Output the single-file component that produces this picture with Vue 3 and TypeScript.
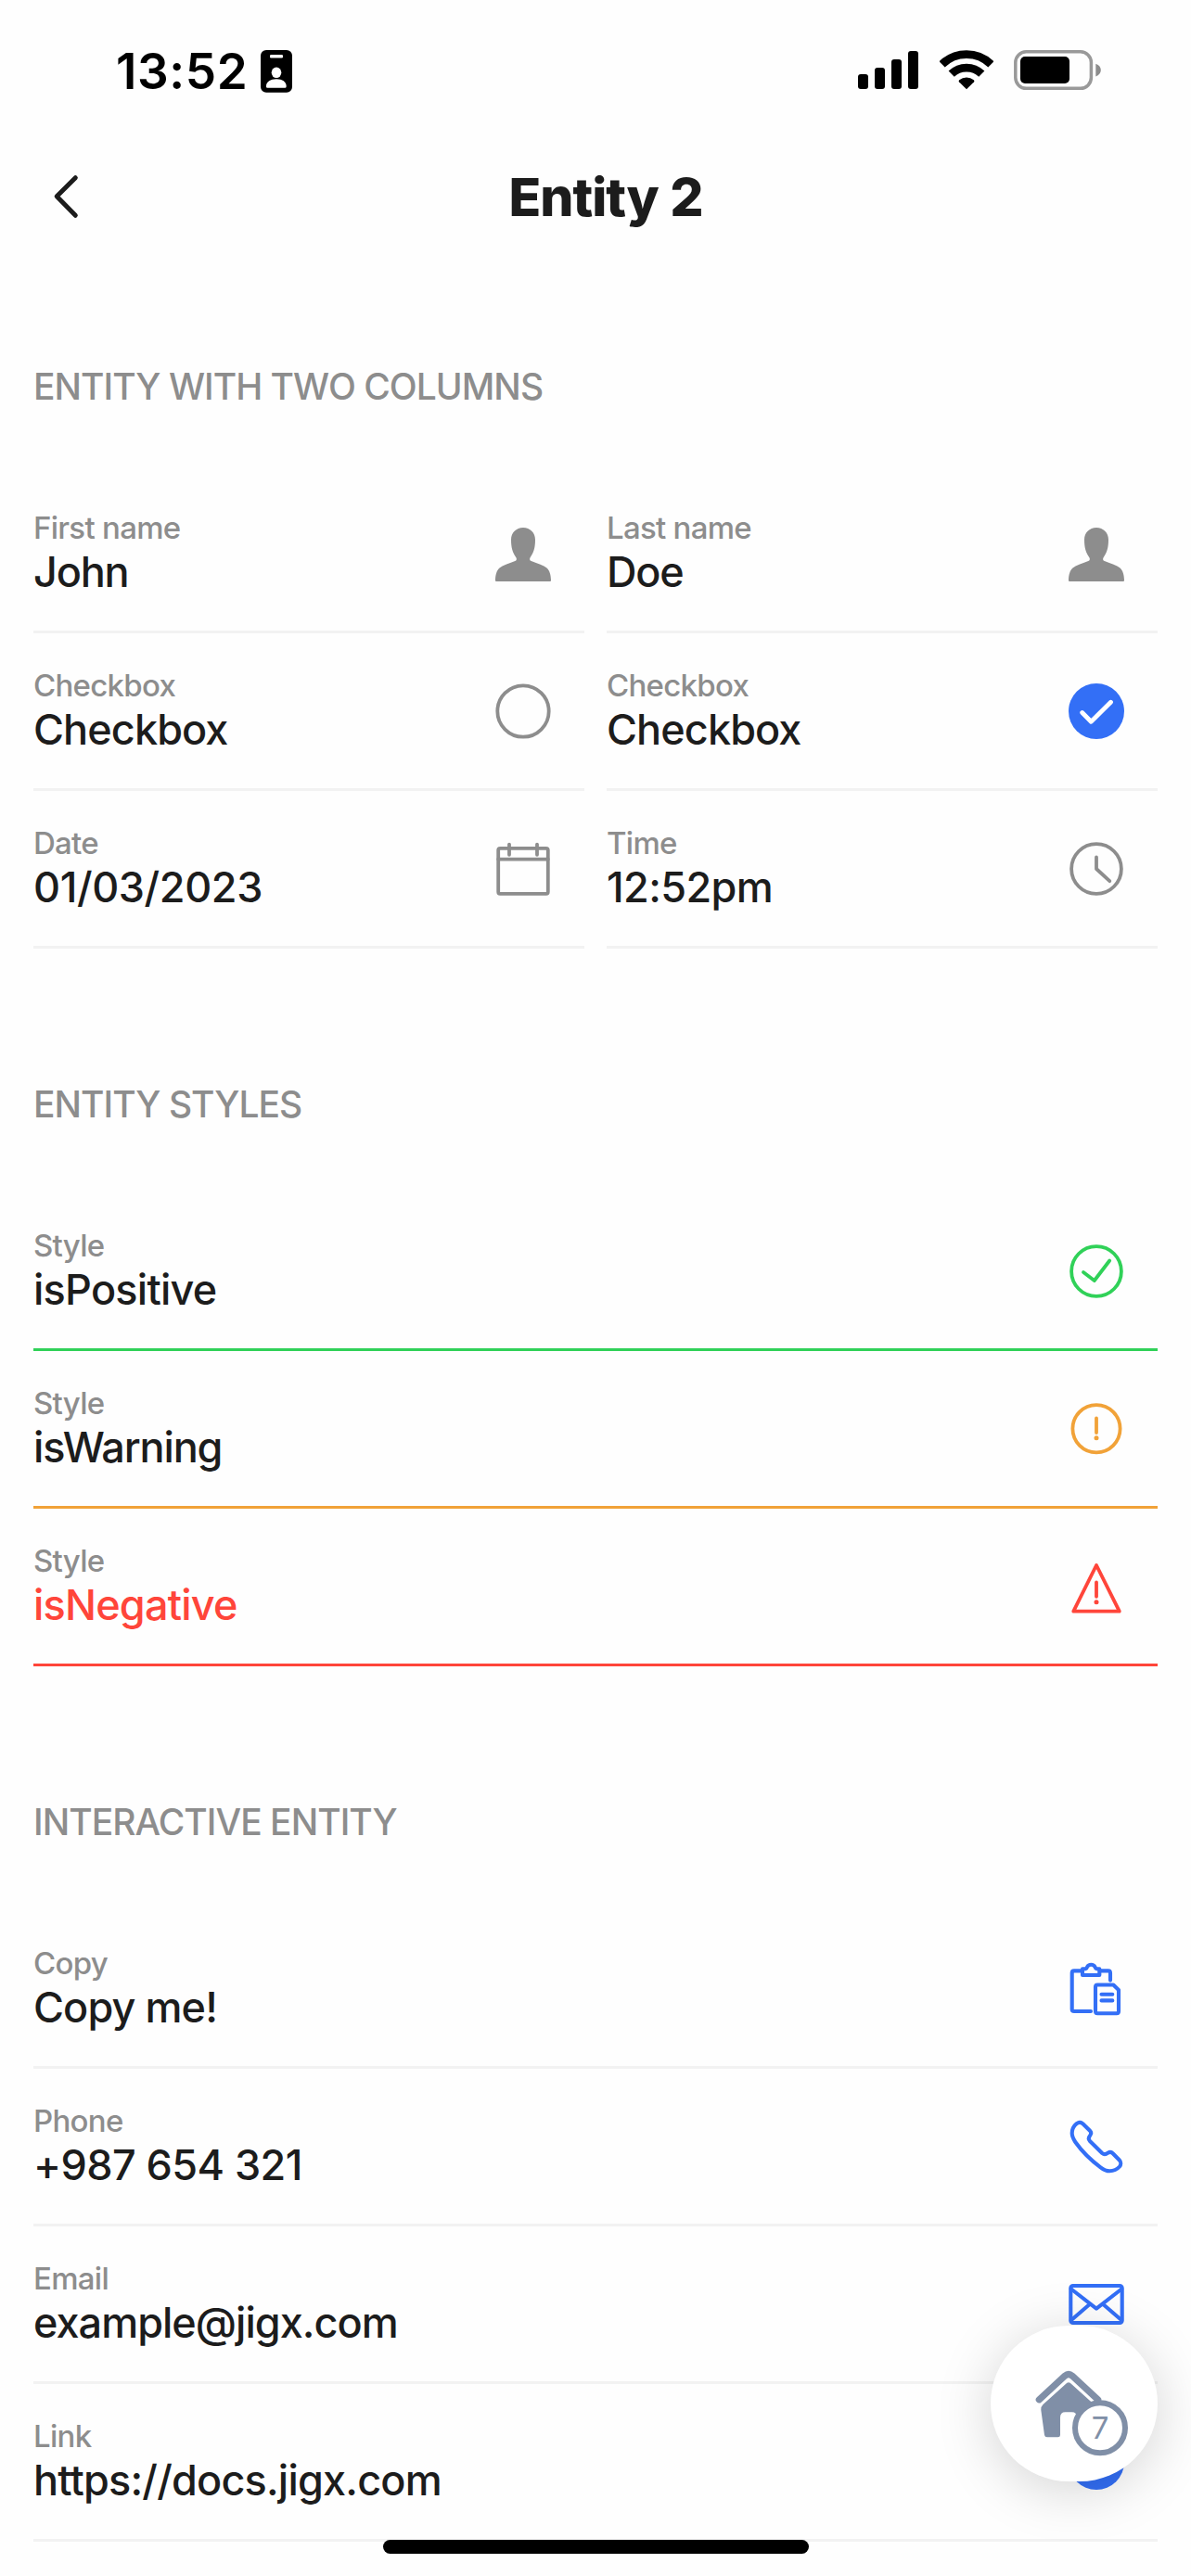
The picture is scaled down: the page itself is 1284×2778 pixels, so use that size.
<script setup lang="ts">
type Tone = 'default' | 'positive' | 'warning' | 'negative'
type IconName =
  | 'person' | 'circle' | 'checked' | 'calendar' | 'clock'
  | 'positive' | 'warning' | 'negative'
  | 'copy' | 'phone' | 'mail' | 'link'

interface Field {
  label: string
  value: string
  icon: IconName
  tone?: Tone
  /* letter spacing of the value, px */
  tracking?: number
}

interface Section {
  title: string
  columns: 1 | 2
  fields: Field[]
}

const sections: Section[] = [
  {
    title: 'ENTITY WITH TWO COLUMNS',
    columns: 2,
    fields: [
      { label: 'First name', value: 'John', icon: 'person', tracking: -1.2 },
      { label: 'Last name', value: 'Doe', icon: 'person', tracking: -1.2 },
      { label: 'Checkbox', value: 'Checkbox', icon: 'circle' },
      { label: 'Checkbox', value: 'Checkbox', icon: 'checked' },
      { label: 'Date', value: '01/03/2023', icon: 'calendar', tracking: -0.4 },
      { label: 'Time', value: '12:52pm', icon: 'clock', tracking: -0.6 },
    ],
  },
  {
    title: 'ENTITY STYLES',
    columns: 1,
    fields: [
      { label: 'Style', value: 'isPositive', icon: 'positive', tone: 'positive', tracking: -0.75 },
      { label: 'Style', value: 'isWarning', icon: 'warning', tone: 'warning', tracking: -1.15 },
      { label: 'Style', value: 'isNegative', icon: 'negative', tone: 'negative', tracking: -0.8 },
    ],
  },
  {
    title: 'INTERACTIVE ENTITY',
    columns: 1,
    fields: [
      { label: 'Copy', value: 'Copy me!', icon: 'copy' },
      { label: 'Phone', value: '+987 654 321', icon: 'phone', tracking: -0.58 },
      { label: 'Email', value: 'example@jigx.com', icon: 'mail', tracking: -0.97 },
      { label: 'Link', value: 'https://docs.jigx.com', icon: 'link', tracking: -0.8 },
    ],
  },
]
</script>

<template>
  <div class="screen">
    <header class="status">
      <div class="status-left">
        <span class="time">13:52</span>
        <svg class="id-badge" width="34" height="46" viewBox="0 0 34 46">
          <rect width="34" height="45.7" rx="6" fill="#000" />
          <rect x="10" y="5" width="14" height="3.4" rx="1.2" fill="#fff" />
          <ellipse cx="17" cy="24.3" rx="5.3" ry="5.8" fill="#fff" />
          <path d="M6 38.5C6 34.5 10.5 31.3 17 31.3S27.6 34.5 27.6 38.5V39.4Q27.6 40.7 26.3 40.7H7.3Q6 40.7 6 39.4Z" fill="#fff" />
        </svg>
      </div>
      <div class="status-right">
        <svg width="65" height="44" viewBox="0 0 65 44">
          <rect x="0" y="26" width="11" height="16" rx="3" />
          <rect x="18" y="19" width="11" height="23" rx="3" />
          <rect x="36" y="10" width="11" height="32" rx="3" />
          <rect x="54" y="1" width="11" height="41" rx="3" />
        </svg>
        <svg class="wifi" width="58" height="44" viewBox="0 0 58 44">
          <path d="M2.6 15.3A37.8 37.8 0 0 1 55.4 15.3" fill="none" stroke="#000" stroke-width="8.8" />
          <path d="M12.7 25.7A23.3 23.3 0 0 1 45.3 25.7" fill="none" stroke="#000" stroke-width="8.8" />
          <path d="M29 42.3L20.9 34.2Q20.1 33.3 21.2 32.3A12.5 12.5 0 0 1 36.8 32.3Q37.9 33.3 37.1 34.2Z" />
        </svg>
        <svg class="battery" width="95" height="44" viewBox="0 0 95 44">
          <rect x="1.8" y="1.8" width="81.6" height="39.5" rx="11.5" fill="none" stroke="#999" stroke-width="3.5" />
          <rect x="7" y="7" width="53" height="29" rx="5" />
          <path d="M88.3 14.8C92 16 93.8 18.6 93.8 21.6S92 27.2 88.3 28.4Z" fill="#8c8c8c" />
        </svg>
      </div>
    </header>

    <nav class="nav">
      <svg class="back" width="34" height="48" viewBox="0 0 34 48">
        <path d="M27.3 3.7L7.2 23.8L27.3 44.3" fill="none" stroke="#1c1c1c" stroke-width="5" stroke-linecap="round" stroke-linejoin="round" />
      </svg>
      <h1 class="title">Entity 2</h1>
    </nav>

    <main>
      <section v-for="s in sections" :key="s.title" class="section">
        <h2 class="heading">{{ s.title }}</h2>
        <div class="grid" :class="{ two: s.columns === 2 }">
          <div v-for="(f, i) in s.fields" :key="i" class="field" :class="f.tone">
            <div class="texts">
              <span class="label">{{ f.label }}</span>
              <span class="value" :style="{ letterSpacing: (f.tracking ?? -0.9) + 'px' }">{{ f.value }}</span>
            </div>
            <svg class="icon" :class="'i-' + f.icon" viewBox="0 0 60 60" width="60" height="60">
              <path
                v-if="f.icon === 'person'"
                class="solid"
                d="M30 2C37.5 2 43 7.5 43 15C43 24 41.3 29 37.6 34.2C36.7 35.8 37 37.4 38.7 38.1C46 40.8 52 42.8 55.5 45.4C58.2 47.7 60 52.5 60 59Q60 60 59 60H1Q0 60 0 59C0 52.5 1.8 47.7 4.5 45.4C8 42.8 14 40.8 21.3 38.1C23 37.4 23.3 35.8 22.4 34.2C18.7 29 17 24 17 15C17 7.5 22.5 2 30 2Z"
              />
              <circle v-else-if="f.icon === 'circle'" cx="30" cy="30" r="27.7" />
              <template v-else-if="f.icon === 'checked'">
                <circle class="solid" cx="30" cy="30" r="30" />
                <path d="M14.7 31.5L24.3 41.3L45.5 20.2" stroke="#fff" stroke-width="4.8" />
              </template>
              <template v-else-if="f.icon === 'calendar'">
                <rect x="3.2" y="7.8" width="53.6" height="49" rx="2" />
                <path d="M3.2 19.6H56.8M15 3.6V14.8M45 3.6V14.8" />
              </template>
              <template v-else-if="f.icon === 'clock'">
                <circle cx="30" cy="30" r="26.9" />
                <path d="M30 17.5V30L44.3 43.2" />
              </template>
              <template v-else-if="f.icon === 'positive'">
                <circle cx="30" cy="30" r="26.9" />
                <path d="M16 31L27.8 40L44.2 18.5" />
              </template>
              <template v-else-if="f.icon === 'warning'">
                <circle cx="30" cy="29.8" r="25.6" />
                <path d="M30 18.5V34" />
                <circle class="solid" cx="30" cy="39.7" r="2.5" />
              </template>
              <template v-else-if="f.icon === 'negative'">
                <path d="M30 7L54.8 56.7H5.3Z" />
                <path d="M30 25.5V40.8" />
                <circle class="solid" cx="30" cy="46.7" r="2.5" />
              </template>
              <template v-else-if="f.icon === 'copy'">
                <path d="M15 10.4H6Q3.7 10.4 3.7 12.7V51.7Q3.7 54 6 54H24M34 10.4H42.7Q45 10.4 45 12.7V20.6" />
                <path d="M15 15V8.2H18.2Q19.8 7.8 20 6.3Q21.3 3.7 24.3 3.7T28.6 6.3Q28.8 7.8 30.4 8.2H33.3V15Z" />
                <path d="M31.2 25.5H48.3L54 31V54Q54 56.2 51.8 56.2H31.2Q29 56.2 29 54V27.7Q29 25.5 31.2 25.5Z" />
                <path d="M35.5 35.7H47.3M35.5 42.4H47.3" />
              </template>
              <path
                v-else-if="f.icon === 'phone'"
                d="M15.6 5.5C13.6 3.5 10.8 3.5 8.7 5.1C5.5 7.7 3.7 11.5 3.7 15.5C3.7 19.5 5 21.5 7.3 25C14.5 35.2 24 44.5 34.5 52.3C38 55 40.5 56.3 44.3 56.3C48.8 56.2 52.2 54.6 55 51.5C56.7 49.5 56.7 46.5 54.8 44.5L47.7 37.2C46.3 35.7 44.3 35.5 42.5 36.7C40.3 38.4 38 38.6 36.2 37L23 24C21.3 22.3 21.5 20.2 23 18.3C24.6 16.3 24.5 14.3 23 12.8Z"
              />
              <template v-else-if="f.icon === 'mail'">
                <rect x="2.3" y="10" width="55.4" height="40" rx="2.5" />
                <path d="M2.8 13.5L30 34.6L57.2 13.5M23 29.8L3 47M37 29.8L57 47" />
              </template>
              <circle v-else class="solid" cx="30" cy="30" r="30" />
            </svg>
          </div>
        </div>
      </section>
    </main>

    <button class="fab" type="button" aria-label="Home">
      <svg width="180" height="168" viewBox="0 0 180 168">
        <g fill="#808fa7">
          <path d="M52.3 79.8L80 54.2Q84 50.7 88 54.2L115.7 79.8" fill="none" stroke="#808fa7" stroke-width="7.2" stroke-linecap="round" />
          <path d="M82.3 61.8Q84 60.5 85.7 61.8L111.5 85Q114 87.3 113.7 91L111 118Q110.7 120.3 108.5 120.3H94.5Q93 120.3 93 118V99Q93 93.2 87.5 93.2H80.5Q75 93.2 75 99V118Q75 120.3 72.5 120.3H61Q58.4 120.3 58 118L54.3 91Q54 87.3 56.5 85Z" />
        </g>
        <circle cx="118" cy="110.3" r="27" fill="#fff" stroke="#808fa7" stroke-width="6" />
      </svg>
      <span class="count">7</span>
    </button>
    <div class="home-indicator"></div>
  </div>
</template>

<style>
body {
  margin: 0;
  background: #fefefe;
}
</style>

<style scoped>
.screen {
  position: relative;
  width: 1284px;
  height: 2778px;
  overflow: hidden;
  background: #fefefe;
  color: #1c1c1c;
  font-family: Inter, 'Liberation Sans', sans-serif;
}

.status {
  display: flex;
  justify-content: space-between;
  box-sizing: border-box;
  height: 141px;
  padding: 54px 96px 0 125px;
}

.status-left,
.status-right {
  display: flex;
  align-items: flex-start;
}

.time {
  width: 156px;
  height: 46px;
  line-height: 47px;
  font-size: 53px;
  font-weight: 600;
  letter-spacing: 0.6px;
  color: #000;
}

.wifi,
.battery {
  margin-left: 22.5px;
}

.nav {
  display: flex;
  align-items: center;
  height: 142px;
  padding-left: 54px;
}

.back {
  flex: none;
}

.title {
  width: 1130px;
  margin: 0;
  padding-top: 2px;
  text-align: center;
  font-size: 57px;
  line-height: 70px;
  font-weight: 800;
  letter-spacing: -1px;
  word-spacing: 1px;
}

main {
  margin-top: -34px;
  padding: 0 36px;
}

.section {
  padding-top: 144px;
}

.heading {
  margin: 0;
  padding-bottom: 72px;
  font-size: 39px;
  line-height: 48px;
  font-weight: 500;
  letter-spacing: -0.98px;
  color: #8d8d8d;
}

.grid {
  display: grid;
  grid-template-columns: 1fr;
  column-gap: 24px;
}

.grid.two {
  grid-template-columns: 1fr 1fr;
}

.field {
  display: flex;
  justify-content: space-between;
  box-sizing: border-box;
  height: 170px;
  padding-right: 36px;
  border-bottom: 3px solid #f2f2f2;
}

.texts {
  display: flex;
  flex-direction: column;
  gap: 1px;
  padding-top: 36px;
}

.label {
  font-size: 33px;
  line-height: 40px;
  font-weight: 500;
  letter-spacing: -0.72px;
  color: #8d8d8d;
}

.value {
  font-size: 45px;
  line-height: 54px;
  font-weight: 500;
}

.icon {
  margin-top: 54px;
  overflow: visible;
  fill: none;
  stroke: #8d8d8d;
  stroke-width: 3.8;
  stroke-linecap: round;
  stroke-linejoin: round;
  color: #8d8d8d;
}

.icon .solid {
  fill: currentColor;
  stroke: none;
}

.i-checked,
.i-link {
  color: #336ff6;
}

.i-copy,
.i-phone,
.i-mail {
  stroke: #336ff6;
  stroke-width: 4.1;
}

.positive {
  border-color: #30d158;
}

.positive .icon {
  stroke: #30d158;
}

.warning {
  border-color: #f1a238;
}

.warning .icon {
  stroke: #f1a238;
  color: #f1a238;
}

.negative {
  border-color: #ff453a;
}

.negative .value {
  color: #ff453a;
}

.negative .icon {
  stroke: #ff453a;
  color: #ff453a;
}

.fab {
  position: absolute;
  right: 36px;
  bottom: 102px;
  width: 180px;
  height: 168px;
  padding: 0;
  border: 0;
  border-radius: 84px;
  background: #fff;
  box-shadow: 0 9px 60px rgba(0, 0, 0, 0.17);
}

.fab svg {
  display: block;
}

.count {
  position: absolute;
  left: 91px;
  top: 90px;
  width: 54px;
  line-height: 40px;
  text-align: center;
  font-family: Inter, sans-serif;
  font-size: 33px;
  color: #808fa7;
}

.home-indicator {
  position: absolute;
  left: 413px;
  bottom: 24px;
  width: 459px;
  height: 15px;
  border-radius: 8px;
  background: #000;
}
</style>
